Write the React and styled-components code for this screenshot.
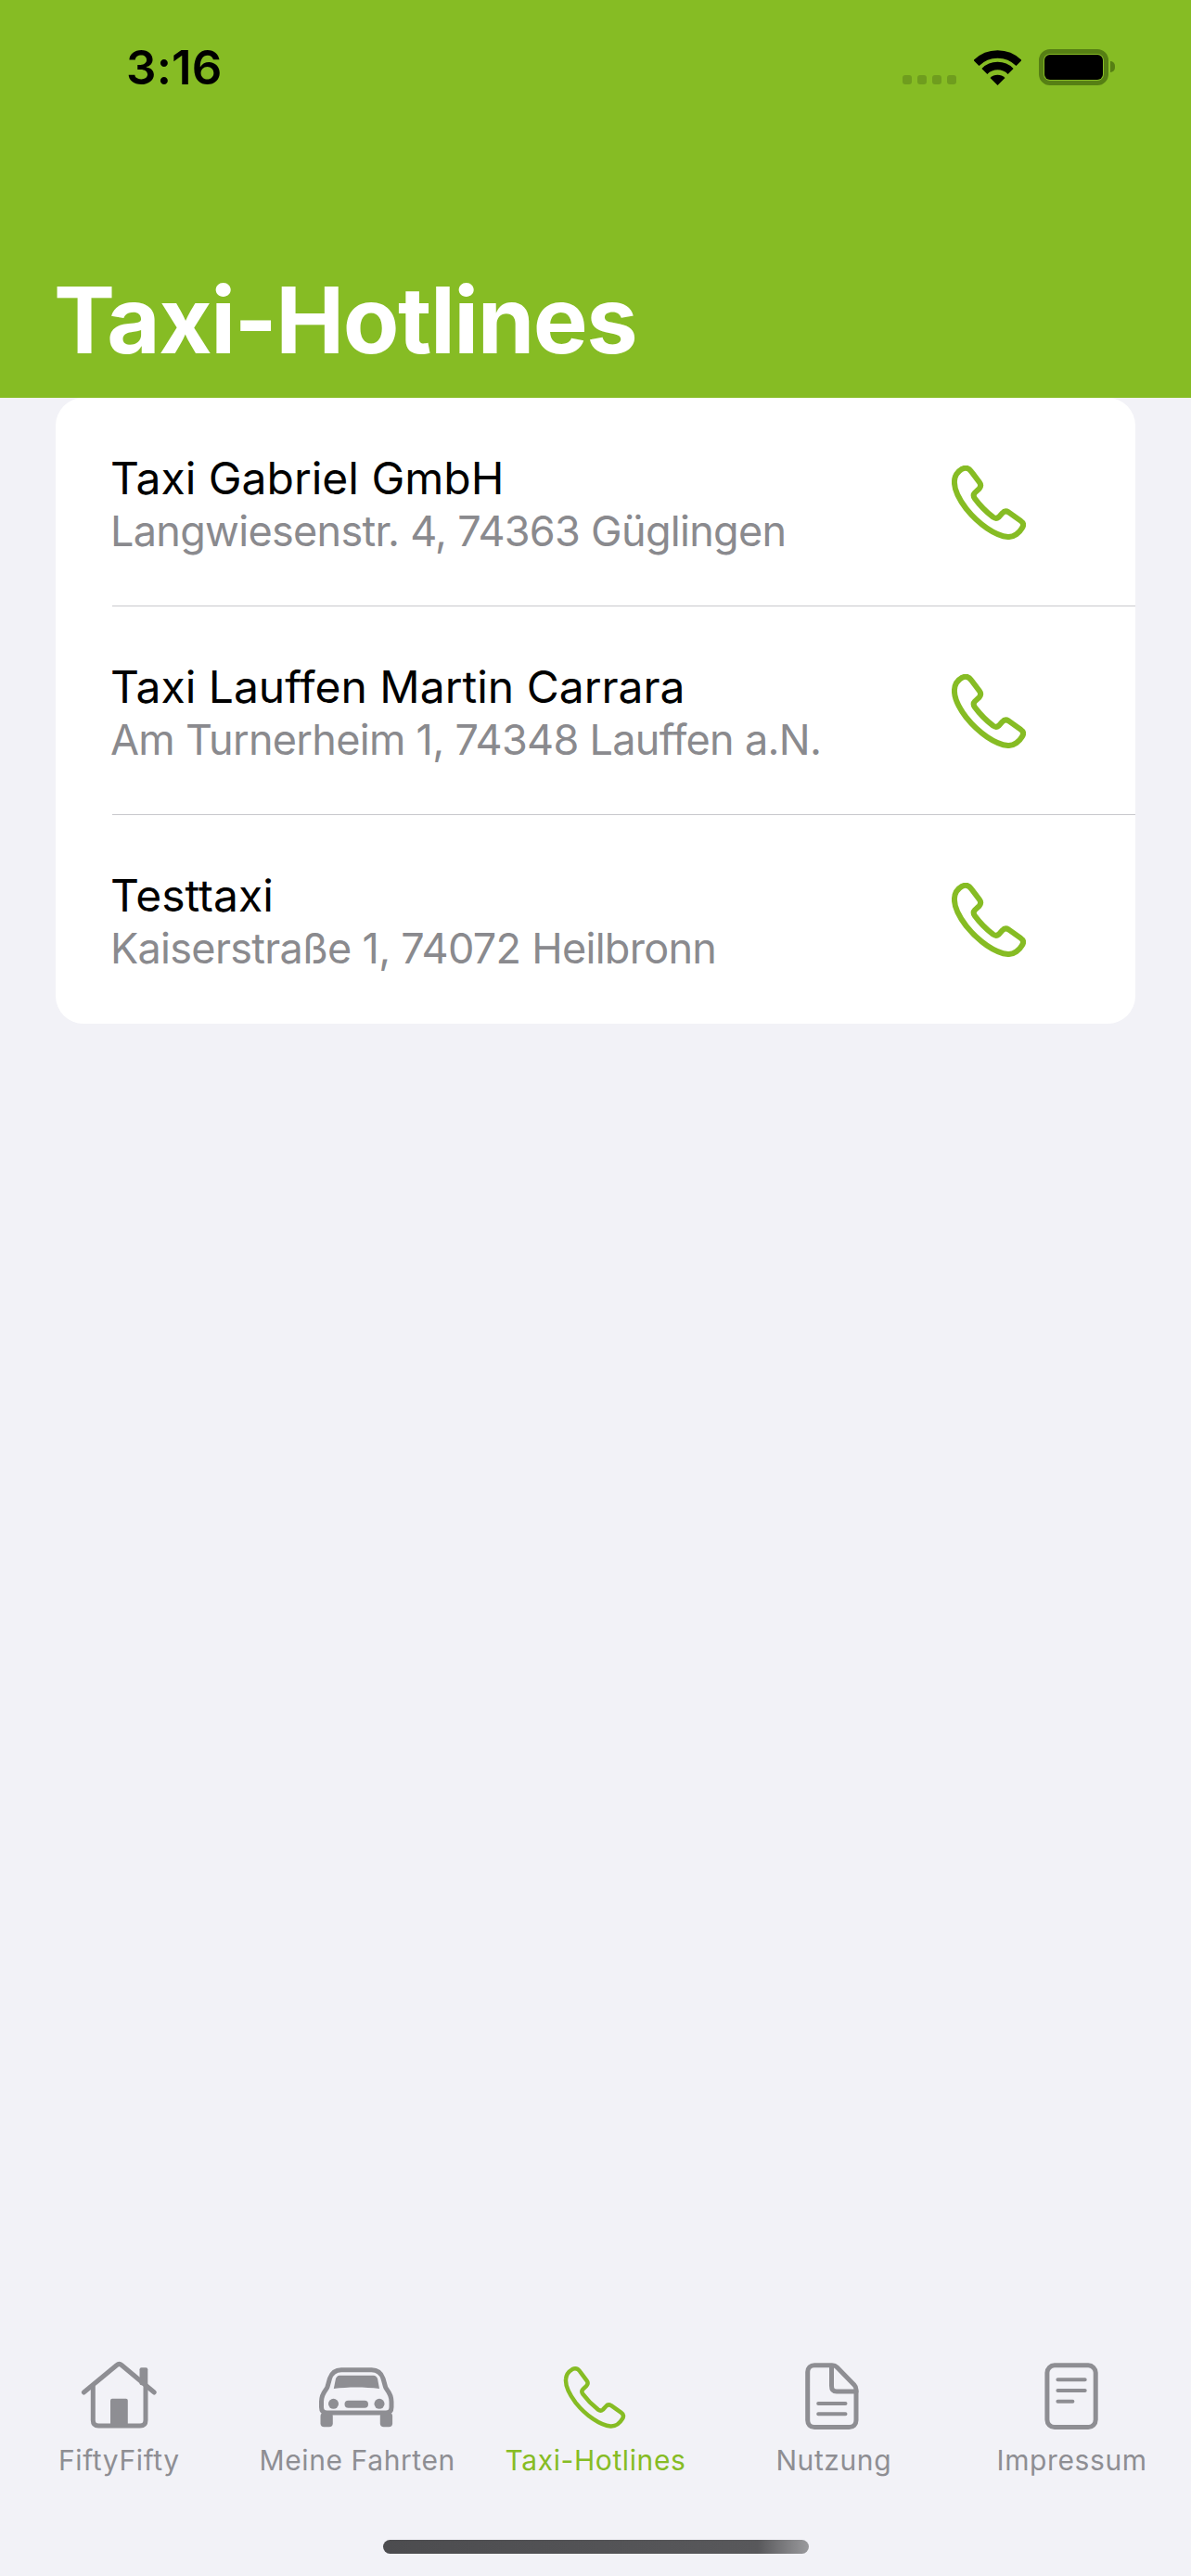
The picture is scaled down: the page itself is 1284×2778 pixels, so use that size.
import React from 'react'
import styled, { createGlobalStyle } from 'styled-components'

const GREEN = '#86bc24'
const GREY = '#8e8e93'

const hotlines = [
  { name: 'Taxi Gabriel GmbH', address: 'Langwiesenstr. 4, 74363 Güglingen' },
  { name: 'Taxi Lauffen Martin Carrara', address: 'Am Turnerheim 1, 74348 Lauffen a.N.' },
  { name: 'Testtaxi', address: 'Kaiserstraße 1, 74072 Heilbronn' },
]

const PHONE_PATH =
  'M112 76C125 70 135 75 142 85L168 120C174 128 172 134 167 140L153 153C148 158 148 165 153 172C170 195 190 215 212 232C219 237 224 237 230 232L242 219C248 212 255 212 262 216L300 243C310 250 312 258 305 268C297 282 280 297 260 296C220 293 165 255 125 205C100 172 85 140 87 115C88 97 98 84 112 76Z'

const PhoneIcon = () => (
  <svg width="80" height="80" viewBox="78 65 240 240" fill="none" stroke={GREEN} strokeWidth="18" strokeLinejoin="round">
    <path d={PHONE_PATH} />
  </svg>
)

const WifiIcon = () => (
  <svg width="51" height="38" viewBox="0 0 51 38" fill="none" stroke="#000" strokeWidth="8.5">
    <path d="M2.5 14A32.5 32.5 0 0 1 48.5 14" />
    <path d="M11.4 22.9A20 20 0 0 1 39.6 22.9" />
    <path d="M25.5 38L17.5 30A11.3 11.3 0 0 1 33.5 30Z" fill="#000" stroke="none" />
  </svg>
)

const HomeGlyph = () => (
  <g>
    <path d="M12.3 36L48 6.5C49.5 5.2 51.5 5.2 53 6.5L88.3 36" />
    <path d="M22.3 29V66C22.3 70 24.3 72 28.3 72H73C77 72 79 70 79 66V29" />
    <rect x="72.5" y="9.3" width="8.8" height="19" rx="2" fill="currentColor" stroke="none" />
    <rect x="41" y="42.7" width="18.8" height="30" rx="2" fill="currentColor" stroke="none" />
  </g>
)

const CarGlyph = () => (
  <g>
    <path d="M33 11.7H65.6C72 11.7 76 15 78 21L80.5 30C81 33 87 36 87 46V52C87 56 85 58 81 58H17.5C13.5 58 11.5 56 11.5 52V46C11.5 36 17.5 33 18 30L20.5 21C22.5 15 26.5 11.7 33 11.7Z" />
    <path d="M31 17.7H67.5C70 17.7 71 19 72 21L74 32C58 30 40 30 24.8 32L27 21C28 19 29 17.7 31 17.7Z" fill="currentColor" stroke="none" />
    <circle cx="24.5" cy="48.3" r="5.5" fill="currentColor" stroke="none" />
    <circle cx="74" cy="48.3" r="5.5" fill="currentColor" stroke="none" />
    <rect x="36.5" y="44.7" width="25.5" height="8" rx="4" fill="currentColor" stroke="none" />
    <rect x="10.5" y="57.7" width="13.3" height="15.6" rx="4" fill="currentColor" stroke="none" />
    <rect x="74.8" y="57.7" width="13.3" height="15.6" rx="4" fill="currentColor" stroke="none" />
  </g>
)

const PhoneGlyph = () => (
  <svg x="15" y="8" width="68" height="67" viewBox="78 65 240 240" strokeWidth="16">
    <path d={PHONE_PATH} />
  </svg>
)

const DocGlyph = () => (
  <g>
    <path d="M29 6.8H48C50 6.8 52 7.5 53.5 9L72 28C73.4 29.5 74 31 74 33V66C74 70.5 71 73.5 66.5 73.5H29C24.7 73.5 21.7 70.5 21.7 66V14C21.7 9.8 24.7 6.8 29 6.8Z" />
    <path d="M47.5 8V29C47.5 33 49 35 53 35H74" />
    <path d="M33.2 48H62.5M33.2 59.3H62.5" strokeWidth="4" />
  </g>
)

const ImprintGlyph = () => (
  <g>
    <rect x="22.9" y="6.8" width="52.3" height="66.7" rx="8" />
    <path d="M34.4 22.3H63.7M34.4 34H63.7M34.4 45.7H50.4" strokeWidth="4" />
  </g>
)

const tabs = [
  { label: 'FiftyFifty', glyph: <HomeGlyph /> },
  { label: 'Meine Fahrten', glyph: <CarGlyph /> },
  { label: 'Taxi-Hotlines', glyph: <PhoneGlyph />, active: true },
  { label: 'Nutzung', glyph: <DocGlyph /> },
  { label: 'Impressum', glyph: <ImprintGlyph /> },
]

export default function App() {
  return (
    <Screen>
      <GlobalStyle />
      <Header>
        <StatusBar>
          <Time>3:16</Time>
          <StatusIcons>
            <SignalDots>
              <Dot />
              <Dot />
              <Dot />
              <Dot />
            </SignalDots>
            <WifiIcon />
            <Battery>
              <BatteryFill />
            </Battery>
          </StatusIcons>
        </StatusBar>
        <Title>Taxi-Hotlines</Title>
      </Header>
      <Content>
        <Card>
          {hotlines.map((item, i) => (
            <React.Fragment key={item.name}>
              {i > 0 && <Separator />}
              <Row>
                <RowText>
                  <Name>{item.name}</Name>
                  <Address>{item.address}</Address>
                </RowText>
                <CallButton>
                  <PhoneIcon />
                </CallButton>
              </Row>
            </React.Fragment>
          ))}
        </Card>
      </Content>
      <TabBar>
        <Tabs>
          {tabs.map((tab) => (
            <Tab key={tab.label} $active={tab.active}>
              <TabIcon viewBox="0 0 100 80">{tab.glyph}</TabIcon>
              <TabLabel>{tab.label}</TabLabel>
            </Tab>
          ))}
        </Tabs>
        <HomeIndicator />
      </TabBar>
    </Screen>
  )
}

const GlobalStyle = createGlobalStyle`
  html, body {
    margin: 0;
    padding: 0;
    background: #f2f2f7;
  }
  * {
    box-sizing: border-box;
  }
`

const Screen = styled.div`
  width: 1284px;
  height: 2778px;
  display: flex;
  flex-direction: column;
  overflow: hidden;
  background: #f2f2f7;
  font-family: Inter, "Liberation Sans", sans-serif;
`

const Header = styled.header`
  height: 429px;
  flex: none;
  display: flex;
  flex-direction: column;
  justify-content: space-between;
  padding: 53px 89px 33px 58px;
  background: ${GREEN};
`

const StatusBar = styled.div`
  display: flex;
  align-items: flex-end;
  justify-content: space-between;
  height: 39px;
  padding-left: 78px;
`

const Time = styled.span`
  font-size: 51px;
  line-height: 39px;
  font-weight: 600;
  letter-spacing: 0.2px;
  color: #000;
`

const StatusIcons = styled.div`
  display: flex;
  align-items: flex-end;
  gap: 19px;
`

const SignalDots = styled.div`
  display: flex;
  gap: 6px;
  padding-bottom: 1px;
`

const Dot = styled.span`
  width: 10px;
  height: 10px;
  border-radius: 3px;
  background: #6f9d1e;
`

const Battery = styled.div`
  position: relative;
  width: 75px;
  height: 39px;
  padding: 1px;
  border: 5px solid #567f14;
  border-radius: 12px;

  &::after {
    content: '';
    position: absolute;
    right: -12px;
    top: 8px;
    width: 5px;
    height: 12px;
    border-radius: 0 6px 6px 0;
    background: #567f14;
  }
`

const BatteryFill = styled.div`
  width: 100%;
  height: 100%;
  border-radius: 6px;
  background: #000;
`

const Title = styled.h1`
  margin: 0;
  font-size: 99px;
  line-height: 102px;
  font-weight: 700;
  letter-spacing: -1.5px;
  color: #fff;
`

const Content = styled.main`
  flex: 1;
  padding: 0 60px;
`

const Card = styled.section`
  background: #fff;
  border-radius: 30px;
  overflow: hidden;
`

const Row = styled.div`
  height: 224px;
  display: flex;
  align-items: center;
  justify-content: space-between;
  padding: 2px 118px 0 59px;

  &:last-child {
    height: 225px;
    padding-bottom: 1px;
  }
`

const RowText = styled.div`
  display: flex;
  flex-direction: column;
  padding-top: 3px;
`

const Name = styled.span`
  font-size: 48px;
  line-height: 58px;
  font-weight: 400;
  letter-spacing: 0;
  color: #000;
`

const Address = styled.span`
  font-size: 45px;
  line-height: 56px;
  font-weight: 400;
  letter-spacing: -0.7px;
  color: #8a8a8e;
`

const CallButton = styled.div`
  display: flex;
  width: 80px;
  height: 80px;
`

const Separator = styled.div`
  height: 1px;
  margin-left: 61px;
  background: #c8c8cc;
`

const TabBar = styled.footer`
  flex: none;
  height: 234px;
  display: flex;
  flex-direction: column;
  align-items: center;
`

const Tabs = styled.nav`
  width: 100%;
  display: grid;
  grid-template-columns: repeat(5, 1fr);
`

const Tab = styled.div`
  display: flex;
  flex-direction: column;
  align-items: center;
  gap: 11px;
  color: ${(p) => (p.$active ? GREEN : GREY)};
`

const TabIcon = styled.svg`
  display: block;
  width: 100px;
  height: 80px;
  fill: none;
  stroke: currentColor;
  stroke-width: 5;
  stroke-linecap: round;
  stroke-linejoin: round;
`

const TabLabel = styled.span`
  font-size: 30px;
  line-height: 36px;
  font-weight: 400;
  letter-spacing: 0.6px;
  white-space: nowrap;
`

const HomeIndicator = styled.div`
  width: 459px;
  height: 15px;
  margin-top: 68px;
  border-radius: 8px;
  background: linear-gradient(90deg, #4c4c4f 0%, #58585b 88%, #9a9a9d 100%);
`
